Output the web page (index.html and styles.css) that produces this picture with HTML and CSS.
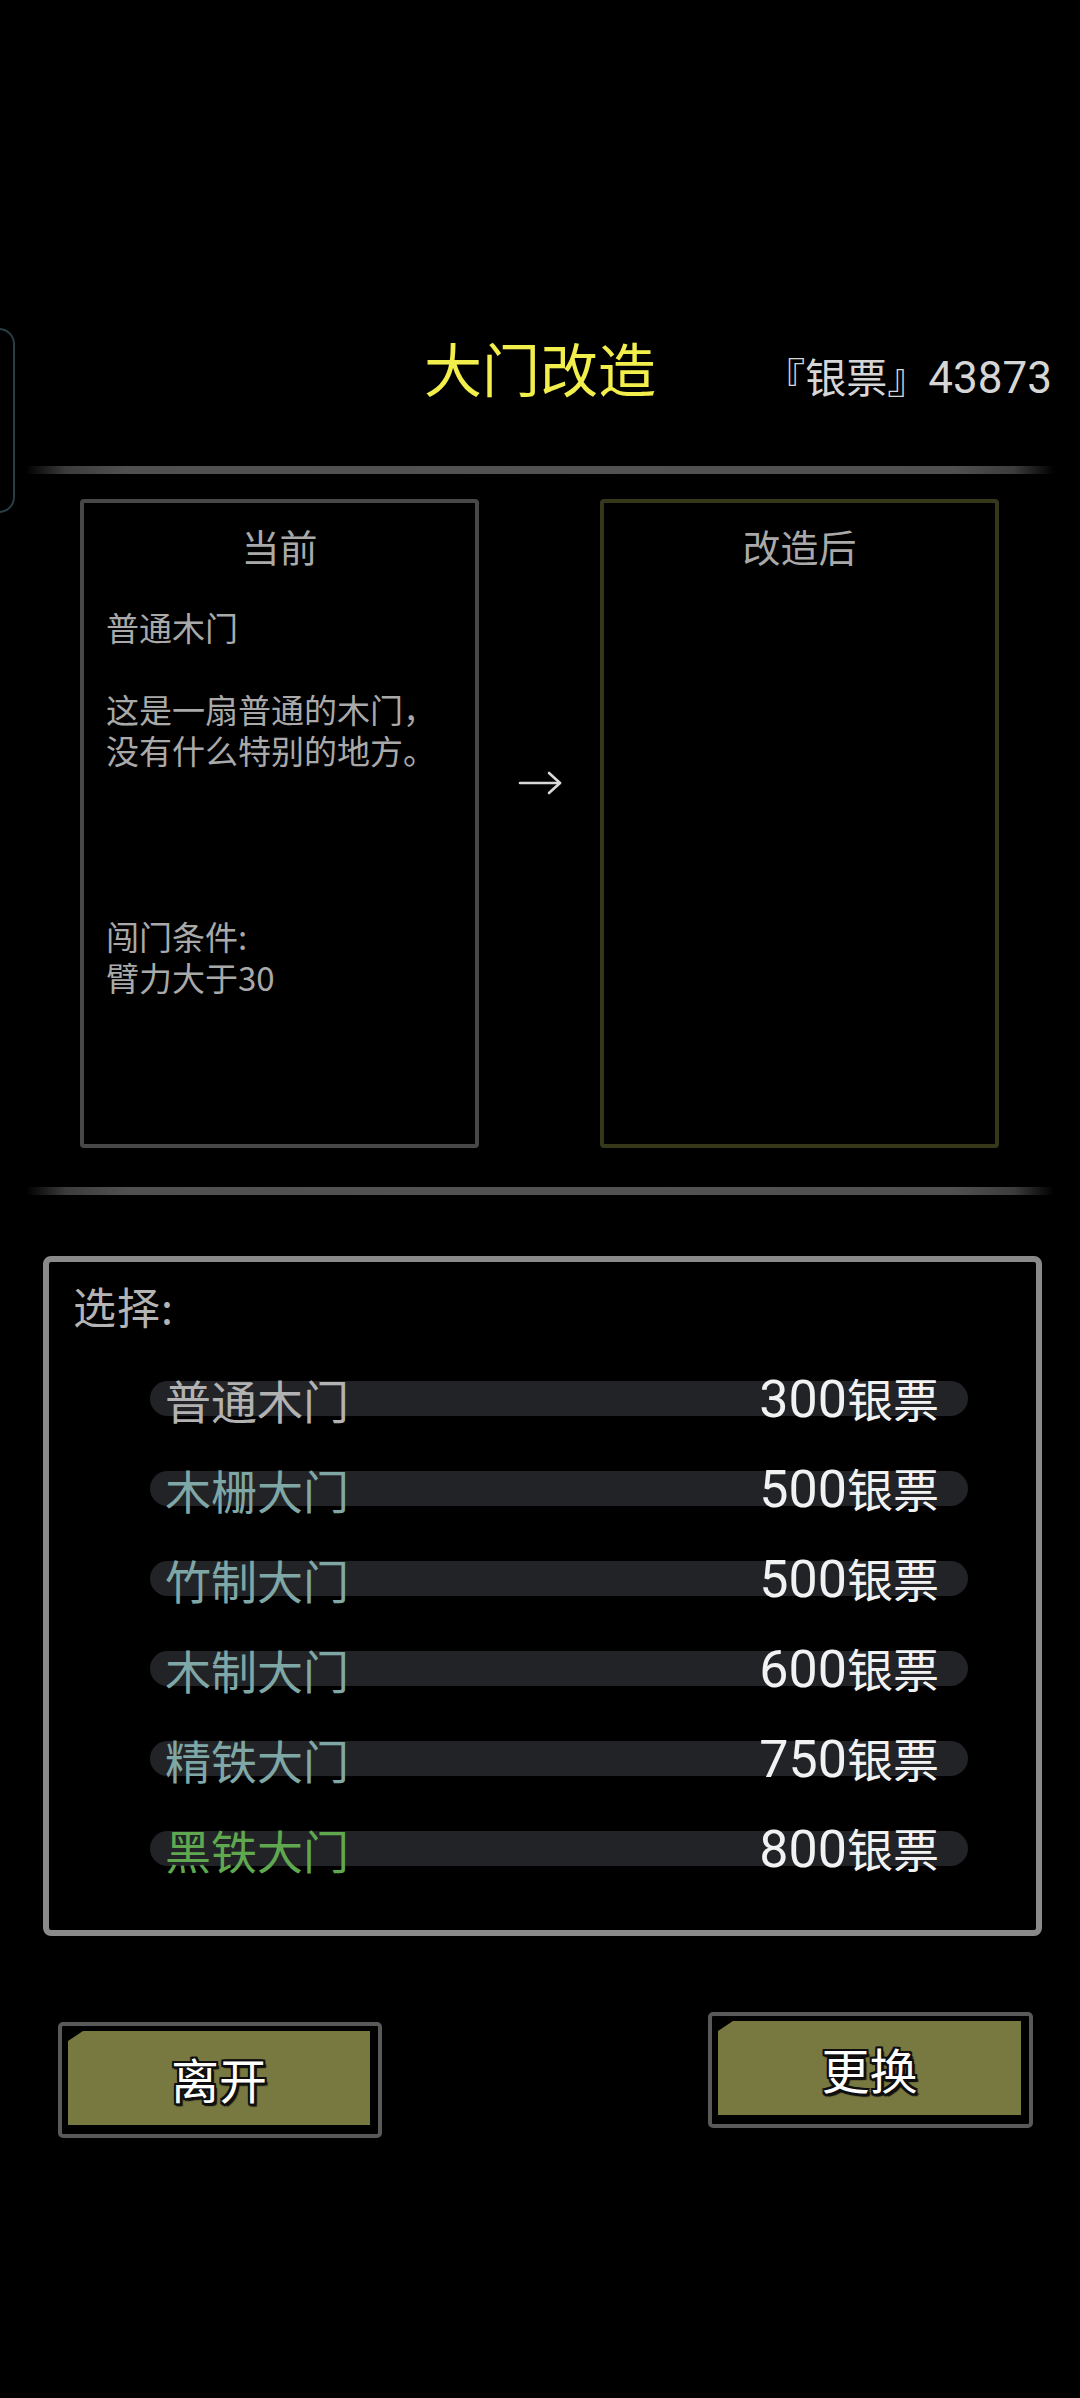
FILE: index.html
```html
<!DOCTYPE html>
<html lang="zh-CN">
<head>
<meta charset="utf-8">
<title>大门改造</title>
<link rel="stylesheet" href="styles.css">
</head>
<body>
<div class="screen">
  <div class="side-handle"></div>

  <header class="header">
    <div class="header-spacer"></div>
    <h1 class="title">大门改造</h1>
    <div class="money">『银票』<span class="num">43873</span></div>
  </header>

  <div class="divider divider-top"></div>

  <section class="compare">
    <div class="panel panel-current">
      <div class="panel-title">当前</div>
      <p class="door-name">普通木门</p>
      <p class="door-desc">这是一扇普通的木门，<br>没有什么特别的地方。</p>
      <p class="door-cond">闯门条件:<br>臂力大于30</p>
    </div>
    <div class="arrow">
      <svg class="arrow-icon" viewBox="0 0 44 24" width="44" height="24">
        <line x1="2" y1="12" x2="42" y2="12"/>
        <polyline points="31,2 42,12 31,22"/>
      </svg>
    </div>
    <div class="panel panel-after">
      <div class="panel-title">改造后</div>
    </div>
  </section>

  <div class="divider divider-mid"></div>

  <section class="select-box">
    <div class="select-label">选择:</div>
    <ul class="options">
      <li class="option"><span class="opt-name name-basic">普通木门</span><span class="opt-price"><span class="num">300</span>银票</span></li>
      <li class="option"><span class="opt-name name-common">木栅大门</span><span class="opt-price"><span class="num">500</span>银票</span></li>
      <li class="option"><span class="opt-name name-common">竹制大门</span><span class="opt-price"><span class="num">500</span>银票</span></li>
      <li class="option"><span class="opt-name name-common">木制大门</span><span class="opt-price"><span class="num">600</span>银票</span></li>
      <li class="option"><span class="opt-name name-common">精铁大门</span><span class="opt-price"><span class="num">750</span>银票</span></li>
      <li class="option"><span class="opt-name name-rare">黑铁大门</span><span class="opt-price"><span class="num">800</span>银票</span></li>
    </ul>
  </section>

  <footer class="actions">
    <button class="btn btn-leave"><span class="btn-face">离开</span></button>
    <button class="btn btn-swap"><span class="btn-face">更换</span></button>
  </footer>
</div>
</body>
</html>
```

FILE: styles.css
```css
* {
  box-sizing: border-box;
}

html, body {
  margin: 0;
  padding: 0;
  background: #000;
}

body {
  font-family: "Noto Sans CJK SC", "Noto Sans", sans-serif;
  color: #aaaaaa;
}

.screen {
  position: relative;
  width: 1080px;
  height: 2398px;
  overflow: hidden;
  background: #000;
}

.side-handle {
  position: absolute;
  left: -30px;
  top: 328px;
  width: 45px;
  height: 185px;
  border: 2px solid #2b3d47;
  border-radius: 16px;
}

/* Header */
.header {
  display: grid;
  grid-template-columns: 1fr auto 1fr;
  align-items: start;
  height: 396px;
  padding: 338px 28px 0 28px;
}

.title {
  margin: 0;
  font-size: 58px;
  line-height: 58px;
  font-weight: 400;
  color: #f2ee4c;
}

.money {
  justify-self: end;
  margin-top: 16px;
  font-size: 41px;
  line-height: 42px;
  color: #d6d6d6;
  white-space: nowrap;
}

.money .num {
  font-family: Roboto, "Noto Sans", sans-serif;
  font-size: 44px;
  line-height: 42px;
}

/* Dividers */
.divider {
  height: 8px;
  margin-left: 26px;
  margin-right: 26px;
  background: linear-gradient(to right,
    rgba(78, 78, 78, 0) 0,
    #3c3c3c 40px,
    #505050 100px,
    #525252 50%,
    #505050 calc(100% - 100px),
    #3c3c3c calc(100% - 40px),
    rgba(78, 78, 78, 0) 100%);
}

.divider-top {
  margin-top: 70px;
}

.divider-mid {
  margin-top: 39px;
}

/* Compare panels */
.compare {
  display: flex;
  align-items: flex-start;
  margin-top: 25px;
  padding-left: 80px;
}

.panel {
  width: 399px;
  height: 649px;
  border: 4px solid #484848;
  border-radius: 4px;
  padding: 24px 22px 0 22px;
}

.panel-after {
  border-color: #37381a;
}

.panel-title {
  text-align: center;
  font-size: 38px;
  line-height: 38px;
  color: #a9a9a9;
}

.door-name,
.door-desc,
.door-cond {
  margin: 0;
  font-size: 33px;
  line-height: 41px;
  color: #a9a9a9;
}

.door-name {
  margin-top: 42px;
}

.door-desc {
  margin-top: 41px;
}

.door-cond {
  margin-top: 145px;
}

.arrow {
  width: 121px;
  display: flex;
  justify-content: center;
  padding-top: 272px;
}

.arrow-icon {
  display: block;
  fill: none;
  stroke: #d9d9d9;
  stroke-width: 2.6;
  stroke-linecap: round;
  stroke-linejoin: round;
}

/* Selection box */
.select-box {
  width: 999px;
  height: 680px;
  margin: 61px 0 0 43px;
  border: 6px solid #8a8a8a;
  border-radius: 8px;
  padding: 22px 0 0 24px;
}

.select-label {
  font-size: 43px;
  line-height: 42px;
  color: #b4b4b4;
  letter-spacing: 1px;
}

.options {
  list-style: none;
  margin: 55px 0 0 77px;
  padding: 0;
  display: flex;
  flex-direction: column;
  gap: 55px;
}

.option {
  width: 818px;
  height: 35px;
  border-radius: 18px;
  background: #222327;
  display: flex;
  align-items: center;
  justify-content: space-between;
  padding: 0 29px 0 15px;
}

.opt-name,
.opt-price {
  font-size: 46px;
  line-height: 46px;
  white-space: nowrap;
}

.opt-price .num {
  font-family: Roboto, "Noto Sans", sans-serif;
  font-size: 52px;
  line-height: 46px;
}

.name-basic {
  color: #b2b2b2;
}

.name-common {
  color: #7fa7a6;
}

.name-rare {
  color: #5fa84f;
}

.opt-price {
  color: #f2f2f2;
}

/* Buttons */
.actions {
  display: flex;
  justify-content: space-between;
  align-items: flex-start;
  margin-top: 76px;
  padding: 0 47px 0 58px;
}

.btn {
  display: block;
  width: 325px;
  height: 116px;
  margin: 0;
  border: 4px solid #595959;
  border-radius: 5px;
  background: #000;
  padding: 5px 8px 9px 6px;
  cursor: pointer;
  font: inherit;
}

.btn-leave {
  width: 324px;
  margin-top: 10px;
}

.btn-face {
  display: flex;
  align-items: center;
  justify-content: center;
  width: 100%;
  height: 100%;
  background: #787841;
  clip-path: polygon(0 10px, 15px 0, 100% 0, 100% 100%, 0 100%);
  font-size: 48px;
  line-height: 48px;
  font-weight: 400;
  color: #ffffff;
  text-shadow:
    0 0 2px #000,
    2px 0 0 #111, -2px 0 0 #111,
    0 2px 0 #111, 0 -2px 0 #111,
    2px 2px 0 #111, -2px -2px 0 #111,
    2px -2px 0 #111, -2px 2px 0 #111,
    0 3px 1px #111, 3px 3px 1px #111;
}
```
